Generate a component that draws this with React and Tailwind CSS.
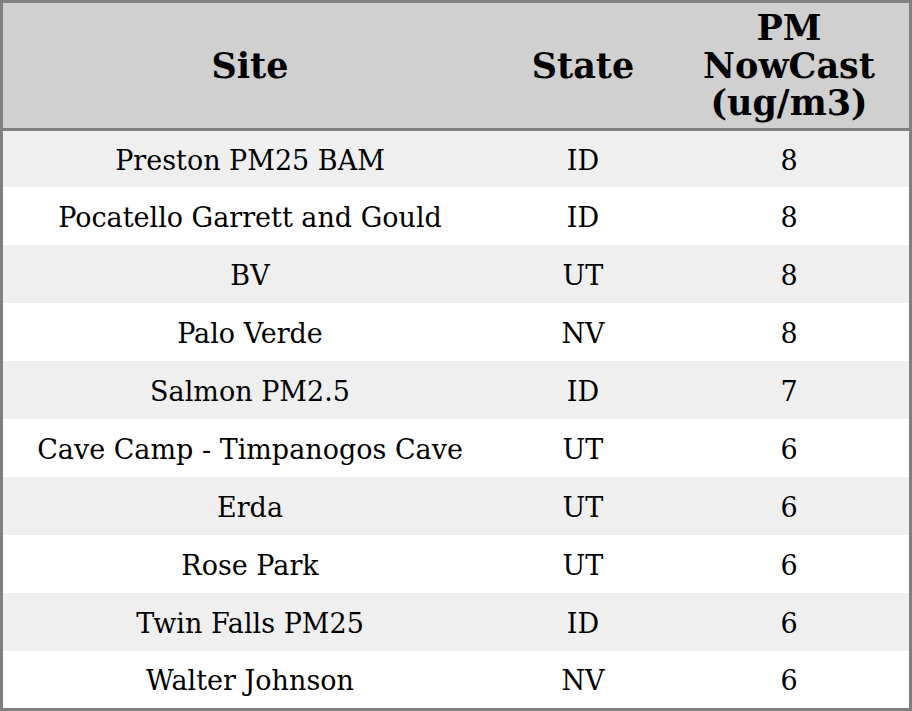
const rows = [
  ["Preston PM25 BAM", "ID", "8"],
  ["Pocatello Garrett and Gould", "ID", "8"],
  ["BV", "UT", "8"],
  ["Palo Verde", "NV", "8"],
  ["Salmon PM2.5", "ID", "7"],
  ["Cave Camp - Timpanogos Cave", "UT", "6"],
  ["Erda", "UT", "6"],
  ["Rose Park", "UT", "6"],
  ["Twin Falls PM25", "ID", "6"],
  ["Walter Johnson", "NV", "6"],
];

const heights = ["h-[56px]", "h-[58px]", "h-[58px]", "h-[58px]", "h-[58px]", "h-[58px]", "h-[58px]", "h-[58px]", "h-[58px]", "h-[57px]"];

export default function App() {
  return (
    <div className="w-[912px] h-[711px] bg-white text-black" style={{ fontFamily: '"DejaVu Serif", serif' }}>
      <div className="w-[912px] h-[711px] border-[3px] border-[#808080] flex flex-col">
        <div className="grid grid-cols-[494px_172px_240px] h-[128px] bg-[#d0d0d0] border-b-[3px] border-[#808080] text-[35px] font-bold leading-[37.5px] text-center">
          <div className="flex items-center justify-center">Site</div>
          <div className="flex items-center justify-center">State</div>
          <div className="flex items-center justify-center">
            PM<br />NowCast<br />(ug/m3)
          </div>
        </div>
        {rows.map((r, i) => (
          <div
            key={i}
            className={`grid grid-cols-[494px_172px_240px] pt-1 text-[27px] text-center ${heights[i]} ${i % 2 === 0 ? "bg-[#efefef]" : "bg-white"}`}
          >
            <div className="flex items-center justify-center whitespace-nowrap">{r[0]}</div>
            <div className="flex items-center justify-center">{r[1]}</div>
            <div className="flex items-center justify-center">{r[2]}</div>
          </div>
        ))}
      </div>
    </div>
  );
}
